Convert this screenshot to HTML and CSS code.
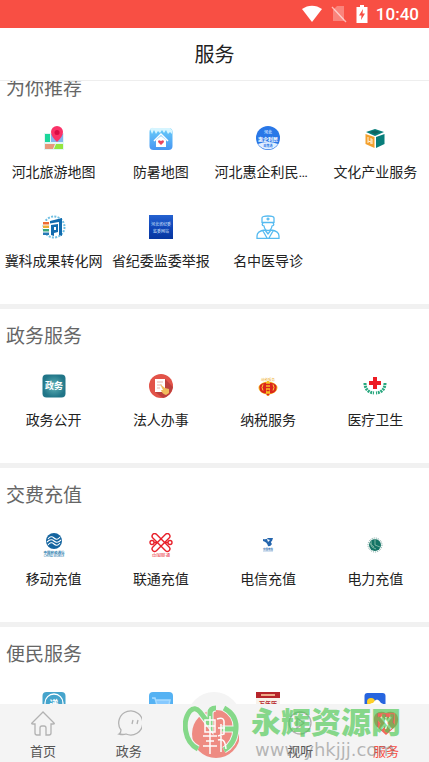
FILE: index.html
```html
<!DOCTYPE html>
<html lang="zh-CN">
<head>
  <meta charset="UTF-8" />
  <meta name="viewport" content="width=device-width, initial-scale=1" />
  <title>服务</title>
  <link rel="stylesheet" href="styles.css">
</head>
<body>
  <div class="statusbar">
    <svg width="22" height="18" viewBox="0 0 22 18"><path d="M1 4C7-.5 15-.5 21 4L11 17z" fill="#fff"/></svg>
    <svg class="nosim" width="16" height="18" viewBox="0 0 16 18"><path d="M6 1h7v15H2V5z" fill="#fff" opacity=".3"/><path d="M1 2l14 15" stroke="#fff" stroke-width="1.3" opacity=".6"/></svg>
    <svg width="12" height="18" viewBox="0 0 12 18"><path d="M4 0h4v2h3.500v16H.5V2H4z" fill="#fff"/><path d="M7 4L3 10.500h2.500L5 15l4-6.500H6.500z" fill="#f84f44"/></svg>
    <span class="time">10:40</span>
  </div>

  <header class="header"><h1>服务</h1></header>

  <main class="content">
    <div class="scrolled">
      <section class="section">
        <h2>为你推荐</h2>
        <div class="grid">
          <a class="item" href="#">
            <svg class="icon" viewBox="0 0 24 24"><path d="M2 7h20v17H2z" fill="#e2f6f4"/><path d="M3 8h5v8H3z" fill="#1bd79a"/><path d="M9 8h12v8H9z" fill="#82b5ef"/><path d="M3 18h10l-2 5H3z" fill="#e8987b"/><path d="M14 18h7v5h-9z" fill="#94e53f"/><path d="M15 16C11 12 9 9 9 6a6 6 0 0 1 12 0c0 3-2 6-6 10z" fill="#fa3268"/><circle cx="15" cy="6.500" r="2.500" fill="#d90b45"/></svg>
            <span>河北旅游地图</span>
          </a>
          <a class="item" href="#">
            <svg class="icon" viewBox="0 0 24 24"><defs><linearGradient id="sky" x2="0" y2="1"><stop stop-color="#69cdfa"/><stop offset="1" stop-color="#4796f2"/></linearGradient></defs><rect x=".5" y="2" width="23" height="22" rx="4" fill="url(#sky)"/><path d="M1 3q2-2 4-1h16l2 2v4l-2-2-2 2-2-4-2 3-2-3-2 3-2-2-2 3-2-4-2 4z" fill="#d6f5ff"/><path d="M5 15l7-7 7 7" fill="none" stroke="#fff" stroke-width="1.500"/><path d="M7 14l5-4 5 4v7H7z" fill="#fff"/><path d="M12 19l-3-3q0-3 3-1 3-2 3 1z" fill="#e9465f"/></svg>
            <span>防暑地图</span>
          </a>
          <a class="item truncated" href="#">
            <svg class="icon" viewBox="0 0 24 24"><circle cx="12" cy="12" r="12" fill="#2977e7"/><path d="M2 18q10-4 20 0a12 12 0 0 1-20 0z" fill="#e2efff"/><g text-anchor="middle" font-weight="700"><text x="12" y="8" font-size="4" fill="#b9d8ff">河北</text><text x="12" y="15" font-size="5" fill="#fff">惠企利民</text><text x="12" y="21" font-size="3" fill="#2977e7">政策通</text></g></svg>
            <span>河北惠企利民…</span>
          </a>
          <a class="item" href="#">
            <svg class="icon" viewBox="0 0 24 24"><path d="M3 6l9-3 9 3-9 4z" fill="#087e7b"/><path d="M7 6l5-1.500L17 6l-5 2z" fill="#10615e"/><path d="M2.500 8l9 3v11l-9-4z" fill="#f4a12e"/><path d="M13 11l8.500-3v10L13 22z" fill="#087e7b"/><path d="M5 11v6m3-5v6m-3-3l3 1m1-3v5" fill="none" stroke="#fff2dc" stroke-width="1"/></svg>
            <span>文化产业服务</span>
          </a>
          <a class="item" href="#">
            <svg class="icon" viewBox="0 0 24 24"><circle cx="12" cy="12" r="10.500" fill="none" stroke="#70bfe2" stroke-width="2" stroke-dasharray="2 1.300"/><path d="M1 6h8v14H1z" fill="#fff"/><path d="M1 7h6v2.500H1z" fill="#ef6b34"/><path d="M1 10.500h6V13H1z" fill="#edac35"/><path d="M1 14h6v2.500H1z" fill="#38a77f"/><path d="M1 17.500h6V20H1z" fill="#2579b5"/><path d="M8 6l12-3v18l-3-1V7L8 8.500z" fill="#116bae"/><path d="M9 10l7-1v8l-4 1v3l-3-1z" fill="#116bae"/><path d="M12 12h2v3h-2z" fill="#fff"/></svg>
            <span>冀科成果转化网</span>
          </a>
          <a class="item" href="#">
            <svg class="icon" viewBox="0 0 24 24"><defs><linearGradient id="navy" x2="0" y2="1"><stop stop-color="#2562d0"/><stop offset=".5" stop-color="#1046b9"/><stop offset="1" stop-color="#07369f"/></linearGradient></defs><path d="M0 0h24v24H0z" fill="url(#navy)"/><g fill="#dce8ff" text-anchor="middle"><text x="12" y="11" font-size="4">河北省纪委</text><text x="12" y="18" font-size="4">监委网站</text></g></svg>
            <span>省纪委监委举报</span>
          </a>
          <a class="item" href="#">
            <svg class="icon" viewBox="0 0 24 24" fill="none" stroke="#55baf0" stroke-width="1.300"><path d="M6 8V3q0-2 6-2t6 2v5M6 7.500h12M7 8q-2 2 1 3c1 6 7 6 8 0q3-1 1-3M9 15q-8 1-8 6v2.300h22V21q0-5-8-6M9 15l3 4 3-4M7 16l4 7m6-7l-4 7M12 2.500v3M10.500 4h3"/></svg>
            <span>名中医导诊</span>
          </a>
        </div>
      </section>

      <section class="section">
        <h2>政务服务</h2>
        <div class="grid">
          <a class="item" href="#">
            <svg class="icon" viewBox="0 0 24 24"><defs><radialGradient id="teal"><stop stop-color="#63b5b9"/><stop offset="1" stop-color="#207588"/></radialGradient></defs><rect x=".5" y=".5" width="23" height="23" rx="4" fill="url(#teal)"/><text x="12" y="15" font-size="9" font-weight="700" text-anchor="middle" fill="#fff">政务</text></svg>
            <span>政务公开</span>
          </a>
          <a class="item" href="#">
            <svg class="icon" viewBox="0 0 24 24"><circle cx="12" cy="12" r="12" fill="#e25349"/><path d="M16 5l8 8q-2 9-10 11l-8-6z" fill="#bd403d"/><path d="M6 5h10v13H6z" fill="#fff"/><path d="M8 8h6m-6 3h5m-5 3h3" stroke="#e8b7ae"/><path d="M11 10l5 4 4 1v4l-3 2q-4-1-5-5l2 0z" fill="#f1bc5c"/></svg>
            <span>法人办事</span>
          </a>
          <a class="item" href="#">
            <svg class="icon" viewBox="0 0 24 24"><text x="12" y="7" font-size="3.500" text-anchor="middle" fill="#eeb43a">纳税服务</text><ellipse cx="12" cy="14" rx="9.500" ry="6.500" fill="#f7be25"/><path d="M10 8.500q-9 1-6 8 2 3 6 3zM14 8.500q9 1 6 8-2 3-6 3z" fill="#db251d"/><path d="M7 10.500q-2 3 0 6m10-6q2 3 0 6" fill="none" stroke="#ffd135"/><path d="M11 7h2v15h-2z" fill="#f7be25"/><path d="M9.500 10.500h5m-5 3h5m-4 3h3m-3 4h3" stroke="#db251d" stroke-width="1.300"/></svg>
            <span>纳税服务</span>
          </a>
          <a class="item" href="#">
            <svg class="icon" viewBox="0 0 24 24"><path d="M10 3h4v4h4v4h-4v4h-4v-4H6V7h4z" fill="#ed1c24"/><path d="M2 9q0 9 9 10m11-10q0 9-9 10" fill="none" stroke="#27a77e" stroke-width="3" stroke-dasharray="2 .8"/></svg>
            <span>医疗卫生</span>
          </a>
        </div>
      </section>

      <section class="section">
        <h2>交费充值</h2>
        <div class="grid">
          <a class="item" href="#">
            <svg class="icon" viewBox="0 0 24 24"><circle cx="12" cy="8" r="8" fill="#14649f"/><path d="M6 6q3-4 6-1t6-1M5 9q4-4 7-1t7-1M6 12q3-4 6-1t6-1" fill="none" stroke="#fff" stroke-width="1.100"/><g fill="#277cad" text-anchor="middle"><text x="12" y="21" font-size="3.500" font-weight="700">中国移动通信</text><text x="12" y="24" font-size="3">CHINA MOBILE</text></g></svg>
            <span>移动充值</span>
          </a>
          <a class="item" href="#">
            <svg class="icon" viewBox="0 0 24 24"><g fill="none" stroke="#e8212b" stroke-width="1.400"><rect x="9.500" y="-2" width="5" height="23" rx="2.500" transform="rotate(45 12 9.500)"/><rect x="9.500" y="-2" width="5" height="23" rx="2.500" transform="rotate(-45 12 9.500)"/><circle cx="3" cy="9.500" r="2"/><circle cx="21" cy="9.500" r="2"/><path d="M5 9.500h3m8 0h3"/></g><text x="12" y="24" font-size="4.500" text-anchor="middle" fill="#e8212b">中国联通</text></svg>
            <span>联通充值</span>
          </a>
          <a class="item" href="#">
            <svg class="icon" viewBox="0 0 24 24"><path d="M7 6q3 1 5-1h5l-1 3q-2 1 0 3-2 3-4 2-1-4-5-5z" fill="#2465ad"/><path d="M11 6l3 1-2 2z" fill="#fff"/><text x="12" y="17" font-size="2.500" font-weight="700" text-anchor="middle" fill="#2465ad">中国电信</text><path d="M7 18h10" stroke="#83abd2" stroke-width=".7"/></svg>
            <span>电信充值</span>
          </a>
          <a class="item" href="#">
            <svg class="icon" viewBox="0 0 24 24"><circle cx="12" cy="12" r="7" fill="none" stroke="#71a39b" stroke-dasharray="1 1"/><circle cx="12" cy="12" r="6" fill="#147365"/><path d="M12 6v6l5 2M7 10q1 5 6 6M8 8q-1 4 3 6" fill="none" stroke="#a7d0bd" stroke-width=".7"/></svg>
            <span>电力充值</span>
          </a>
        </div>
      </section>

      <section class="section">
        <h2>便民服务</h2>
        <div class="grid">
          <a class="item" href="#" aria-label="快递">
            <svg class="icon" viewBox="0 0 24 24"><rect x=".5" width="23" height="24" rx="4" fill="#45a4cc"/><circle cx="12" cy="11" r="9" fill="none" stroke="#fff" stroke-width="1.300"/><text x="12" y="15" font-size="9" font-weight="700" text-anchor="middle" fill="#fff">递</text></svg>
          </a>
          <a class="item" href="#" aria-label="购物">
            <svg class="icon" viewBox="0 0 24 24"><rect width="24" height="24" rx="4" fill="#55b2f3"/><path d="M3 6h3l3 11h10l2-9H7" fill="#86c9ff" stroke="#a6daff" stroke-width="1.500"/></svg>
          </a>
          <a class="item" href="#" aria-label="老黄历">
            <svg class="icon" viewBox="0 0 24 24"><path d="M0 0h24v24H0z" fill="#f8f2ea"/><path d="M0 0h24v6H0z" fill="#b6252a"/><path d="M5 3h14" stroke="#ffd6a6" stroke-width="1.500"/><text x="12" y="14" font-size="6" font-weight="700" text-anchor="middle" fill="#b6252a">万年历</text></svg>
          </a>
          <a class="item" href="#" aria-label="天气">
            <svg class="icon" viewBox="0 0 24 24"><rect x="1.500" y="1" width="21" height="22" rx="3" fill="#2765df"/><circle cx="8" cy="10" r="4" fill="#ffce27"/><path d="M5 16q1-5 5-5 4-7 8 0 4 1 3 5z" fill="#fff"/></svg>
          </a>
        </div>
      </section>
    </div>
  </main>

  <nav class="tabbar">
    <a class="tab" href="#">
      <svg viewBox="0 0 26 26"><path d="M13 2L2 13q-1 1 1 1h2v9q0 2 2 2h3v-7q0-2 2-2h2q2 0 2 2v7h3q2 0 2-2v-9h2q2 0 1-1z"/></svg>
      <span>首页</span>
    </a>
    <a class="tab" href="#">
      <svg viewBox="0 0 26 26"><path d="M3 24q2-1 2-4a12 12 0 1 1 5 4q-3 1-7 0zM17 10l-1 4m6-4l-1 4"/></svg>
      <span>政务</span>
    </a>
    <a class="tab tab-center" href="#" aria-label="冀云"></a>
    <a class="tab" href="#">
      <svg viewBox="0 0 26 26"><circle cx="13" cy="13" r="11"/><path d="M10 8l7 5-7 5z"/></svg>
      <span>视听</span>
    </a>
    <a class="tab active" href="#">
      <svg viewBox="0 0 26 26"><path d="M13 25L3 16C-3 6 5-1 13 3 21-1 29 6 23 16z"/><path class="knot" d="M8 7l5 6 5-6M8 19l5-6 5 6M13 7v12"/></svg>
      <span>服务</span>
    </a>

    <div class="watermark">
      <svg width="56" height="54" viewBox="0 0 56 54">
        <circle cx="33" cy="30" r="24" fill="#ed796f"/>
        <g fill="none" stroke="#f5f5f5" stroke-width="7"><path d="M15 45C1 38-1 17 7 7q5-5 10 1l10 13V9q0-5 6-5M41 4q13 7 12 21-1 15-12 21M39 25h15"/></g>
        <g fill="none" stroke="#72d477" stroke-width="5"><path d="M15 45C1 38-1 17 7 7q5-5 10 1l10 13V9q0-5 6-5M41 4q13 7 12 21-1 15-12 21M39 25h15"/></g>
        <g fill="none" stroke="#fff" stroke-width="1.500"><path d="M27 12v38M22 16h10v12H22zM22 22h10M20 32h14M23 37h8M20 42h14M34 15q8-3 7 5v10l-6 2M38 20v28M35 24h7M35 36q7-3 8 9"/></g>
      </svg>
      <div class="watermark-text">
        <strong>永辉资源网</strong>
        <span>www.yhkjjj.com</span>
      </div>
    </div>
  </nav>
</body>
</html>
```
FILE: styles.css
```css
* {
  box-sizing: border-box;
}
body {
  margin: 0;
  height: 100vh;
  display: flex;
  flex-direction: column;
  font-family: Roboto, 'Noto Sans CJK SC', sans-serif;
  background: #fff;
  color: #222;
}
a {
  color: inherit;
  text-decoration: none;
}
.statusbar {
  flex: none;
  height: 28px;
  padding: 0 10px;
  display: flex;
  align-items: center;
  justify-content: flex-end;
  gap: 8px;
  background: #f84f44;
  color: #fff;
}
.nosim {
  margin-right: 1px;
}
.time {
  font-size: 17px;
  font-weight: 500;
  line-height: 28px;
}
.header {
  flex: none;
  height: 53px;
  border-bottom: 1px solid #eee;
}
.header h1 {
  margin: 0;
  font-size: 20px;
  font-weight: 400;
  line-height: 54px;
  text-align: center;
}

/* Service list, already scrolled down a little */
.content {
  flex: 1;
  min-height: 0;
  overflow: hidden;
}
.scrolled {
  margin-top: -20px;
}
.section {
  padding-bottom: 11px;
  border-bottom: 5px solid #f1f1f1;
}
.section h2 {
  margin: 0;
  padding: 2px 0 0 6px;
  font-size: 19px;
  font-weight: 400;
  line-height: 52px;
  color: #666;
}
.grid {
  display: grid;
  grid-template-columns: repeat(4, 1fr);
}
.item {
  display: flex;
  flex-direction: column;
  align-items: center;
  gap: 12px;
  padding: 11px 0 22px;
  font-size: 14px;
  line-height: 20px;
  white-space: nowrap;
}
/* long names fill the cell and start at its left edge */
.truncated span {
  width: 100%;
}
.icon {
  width: 24px;
  height: 24px;
}

/* Bottom tabs */
.tabbar {
  flex: none;
  position: relative;
  height: 58px;
  display: flex;
  background: #f4f4f4;
}
.tab {
  flex: 1;
  display: flex;
  flex-direction: column;
  align-items: center;
  gap: 7px;
  padding-top: 6px;
  font-size: 13px;
  line-height: 18px;
  color: #555;
}
.tab svg {
  width: 26px;
  height: 26px;
  fill: none;
  stroke: #b2b2b2;
  stroke-width: 1.3;
}
.tab.active {
  color: #f84f44;
}
.tab.active svg {
  fill: #f4655c;
  stroke: none;
}
.tab.active .knot {
  fill: none;
  stroke: #fff;
  stroke-width: 2;
}
.tab-center::before {
  content: "";
  position: absolute;
  top: -12px;
  width: 54px;
  height: 54px;
  border-radius: 50%;
  background: #f4f4f4;
}
.watermark {
  position: absolute;
  left: 183px;
  bottom: 4px;
  display: flex;
  gap: 12px;
  opacity: 0.85;
  pointer-events: none;
}
.watermark-text {
  display: flex;
  flex-direction: column;
  white-space: nowrap;
}
.watermark-text strong {
  font-size: 30px;
  font-weight: 900;
  line-height: 38px;
  color: rgba(79, 201, 86, 0.8);
}
.watermark-text span {
  padding-left: 4px;
  font-family: 'DejaVu Sans', sans-serif;
  font-size: 18px;
  line-height: 16px;
  color: rgba(120, 120, 120, 0.6);
}
```
